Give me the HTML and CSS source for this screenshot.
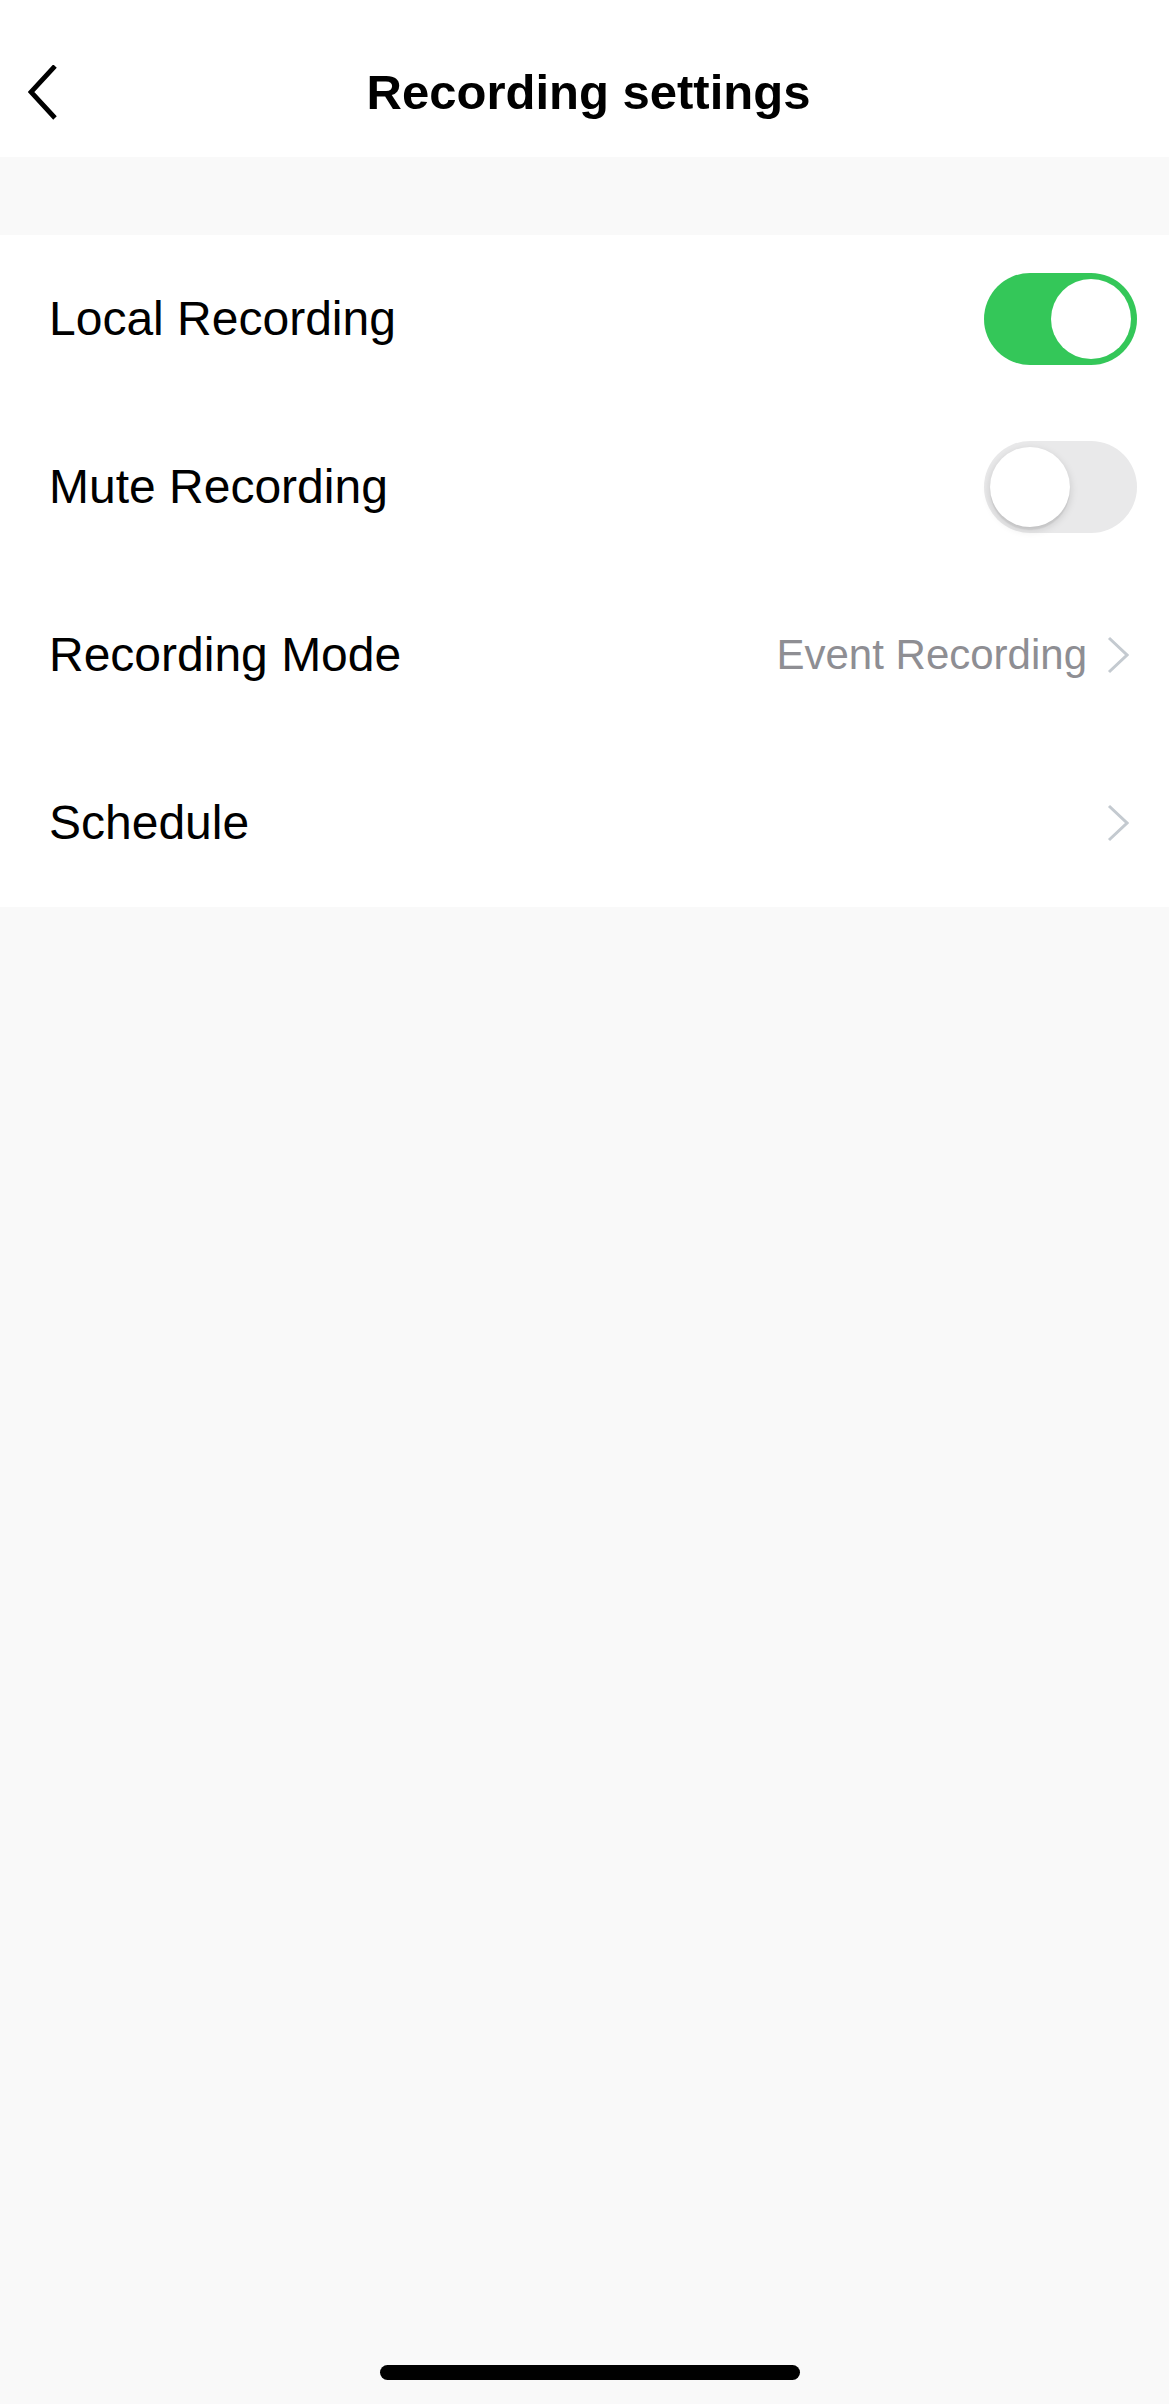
FILE: index.html
```html
<!DOCTYPE html>
<html lang="en">
<head>
<meta charset="utf-8">
<title>Recording settings</title>
<link rel="stylesheet" href="styles.css">
</head>
<body>
<div class="page">
  <header class="header">
    <div class="back">
      <svg class="back-icon" width="32" height="56" viewBox="0 0 32 56" aria-hidden="true">
        <polyline points="27,1 3,27 27,53" fill="none" stroke="#000" stroke-width="4.8" stroke-linejoin="miter"/>
      </svg>
    </div>
    <h1 class="title">Recording settings</h1>
    <div class="header-side"></div>
  </header>
  <div class="spacer"></div>
  <main class="list">
    <div class="row">
      <span class="label">Local Recording</span>
      <span class="toggle on"><span class="knob"></span></span>
    </div>
    <div class="row">
      <span class="label">Mute Recording</span>
      <span class="toggle off"><span class="knob"></span></span>
    </div>
    <div class="row">
      <span class="label">Recording Mode</span>
      <span class="value-wrap">
        <span class="value">Event Recording</span>
        <svg class="chev" width="22" height="38" viewBox="0 0 22 38" aria-hidden="true">
          <polyline points="2,2 20,19 2,36" fill="none" stroke="#c4cad0" stroke-width="3"/>
        </svg>
      </span>
    </div>
    <div class="row">
      <span class="label">Schedule</span>
      <span class="value-wrap">
        <svg class="chev" width="22" height="38" viewBox="0 0 22 38" aria-hidden="true">
          <polyline points="2,2 20,19 2,36" fill="none" stroke="#c4cad0" stroke-width="3"/>
        </svg>
      </span>
    </div>
  </main>
  <div class="fill"></div>
  <div class="home-area"><div class="home-bar"></div></div>
</div>
</body>
</html>
```
FILE: styles.css
```css
html, body {
  margin: 0;
  padding: 0;
  background: #f9f9f9;
}
body {
  font-family: "Liberation Sans", Arial, sans-serif;
  color: #000;
}
.page {
  display: flex;
  flex-direction: column;
  min-height: 2404px;
}
.header {
  box-sizing: border-box;
  height: 157px;
  padding-top: 28px;
  background: #fff;
  display: grid;
  grid-template-columns: 1fr auto 1fr;
  align-items: center;
}
.back {
  padding-left: 28px;
  display: flex;
  align-items: center;
  height: 56px;
}
.back-icon {
  display: block;
}
.title {
  margin: 0;
  font-size: 49px;
  line-height: 1;
  font-weight: 700;
  letter-spacing: 0;
  padding-left: 8px;
}
.spacer {
  height: 78px;
}
.list {
  background: #fff;
  display: flex;
  flex-direction: column;
}
.row {
  box-sizing: border-box;
  height: 168px;
  padding: 0 32px 0 49px;
  display: flex;
  align-items: center;
  justify-content: space-between;
}
.label {
  font-size: 48px;
  line-height: 1;
}
.toggle {
  box-sizing: border-box;
  width: 153px;
  height: 92px;
  border-radius: 46px;
  padding: 6px;
  display: flex;
  align-items: center;
}
.toggle.on {
  background: #34c759;
  justify-content: flex-end;
}
.toggle.off {
  background: #e9e9ea;
  justify-content: flex-start;
}
.knob {
  width: 80px;
  height: 80px;
  border-radius: 50%;
  background: #fff;
}
.toggle.off .knob {
  box-shadow: 0 3px 8px rgba(0, 0, 0, 0.15), 0 3px 1px rgba(0, 0, 0, 0.06);
}
.value-wrap {
  display: flex;
  align-items: center;
  gap: 20px;
  margin-right: 8px;
}
.value {
  font-size: 42px;
  line-height: 1;
  color: #8e8e93;
}
.chev {
  display: block;
}
.fill {
  flex: 1;
}
.home-area {
  padding: 0 0 24px 380px;
}
.home-bar {
  width: 420px;
  height: 15px;
  border-radius: 8px;
  background: #000;
}
```
